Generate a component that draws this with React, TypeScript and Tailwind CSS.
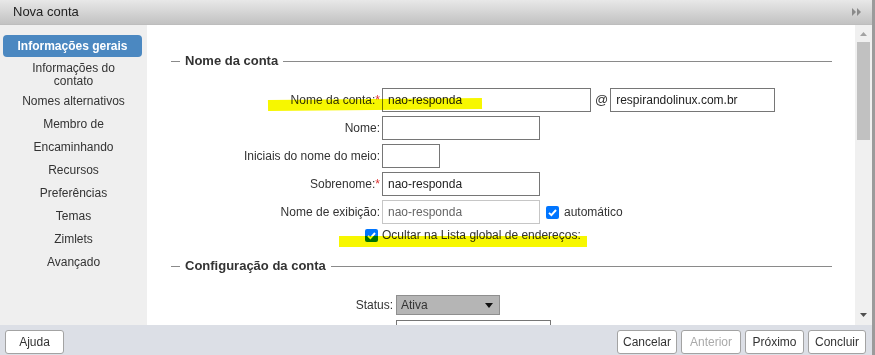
import React from 'react'

const sideItems = ['Nomes alternativos', 'Membro de', 'Encaminhando', 'Recursos', 'Preferências', 'Temas', 'Zimlets', 'Avançado']

const Check = () => (
  <span className="w-[13px] h-[13px] rounded-[2px] bg-[#0075ff] flex items-center justify-center">
    <svg width="11" height="11" viewBox="0 0 11 11">
      <path d="M2 5.8 L4.4 8.2 L9 3" fill="none" stroke="white" strokeWidth="1.9" />
    </svg>
  </span>
)

const Legend = ({ title }: { title: string }) => (
  <div className="flex items-center h-[16px]">
    <div className="w-[9px] h-px bg-[#8a8a8a]" />
    <span className="px-[5px] text-[13px] font-bold text-[#333]">{title}</span>
    <div className="flex-1 h-px bg-[#8a8a8a]" />
  </div>
)

const Field = ({ w, value, muted }: { w: string; value?: string; muted?: boolean }) => (
  <div
    className={`${w} h-[24px] bg-white border flex items-center pl-[5px] ${
      muted ? 'border-[#c6c6c6] text-[#666]' : 'border-[#767676] text-[#222]'
    }`}
  >
    {value}
  </div>
)

const Btn = ({ label, w, disabled }: { label: string; w: string; disabled?: boolean }) => (
  <div
    className={`${w} h-[24px] bg-white border border-[#a3a3a3] rounded-[3px] flex items-center justify-center ${
      disabled ? 'text-[#aaa]' : 'text-[#333]'
    }`}
  >
    {label}
  </div>
)

export default function App() {
  return (
    <div className="w-[875px] h-[355px] flex flex-col overflow-hidden border-r-[3px] border-[#9b9b9b] font-['Liberation_Sans',Arial,sans-serif] text-[12px] text-[#333]">
      <div className="h-[25px] flex-shrink-0 flex items-center justify-between pl-[13px] pr-[10px] bg-gradient-to-b from-[#e8e8e8] to-[#c2c2c2] border-b border-[#bdbdbd]">
        <span className="text-[13px] text-[#222]">Nova conta</span>
        <svg width="10" height="8" viewBox="0 0 10 8">
          <path d="M0 0 L4 4 L0 8 Z M5 0 L9 4 L5 8 Z" fill="#8a8a8a" />
        </svg>
      </div>

      <div className="flex-1 flex min-h-0">
        <div className="w-[147px] flex-shrink-0 bg-[#efefef] pt-[10px] text-center">
          <div className="mx-[3px] w-[139px] h-[22px] rounded-[4px] bg-[#4b88c1] text-white font-bold flex items-center justify-center">
            Informações gerais
          </div>
          <div className="pt-[5px] pb-[1px] leading-[13px]">
            Informações do
            <br />
            contato
          </div>
          {sideItems.map(item => (
            <div key={item} className="h-[23px] flex items-center justify-center">
              {item}
            </div>
          ))}
        </div>

        <div className="flex-1 bg-white relative overflow-hidden pt-[28px] pl-[24px] pr-[23px]">
          <Legend title="Nome da conta" />
          <div className="mt-[19px] grid grid-cols-[209px_1fr] gap-x-[2px] gap-y-[4px] items-center">
            <div className="text-right">
              Nome da conta:<span className="text-[#d33]">*</span>
            </div>
            <div className="flex items-center">
              <Field w="w-[209px]" value="nao-responda" />
              <span className="ml-[4px] mr-[2px] text-[13px]">@</span>
              <Field w="w-[165px]" value="respirandolinux.com.br" />
            </div>
            <div className="text-right">Nome:</div>
            <Field w="w-[158px]" />
            <div className="text-right">Iniciais do nome do meio:</div>
            <Field w="w-[58px]" />
            <div className="text-right">
              Sobrenome:<span className="text-[#d33]">*</span>
            </div>
            <Field w="w-[158px]" value="nao-responda" />
            <div className="text-right">Nome de exibição:</div>
            <div className="flex items-center">
              <Field w="w-[158px]" value="nao-responda" muted />
              <span className="ml-[6px] mr-[5px]">
                <Check />
              </span>
              <span>automático</span>
            </div>
            <div className="flex justify-end pr-[2px] h-[14px] items-center">
              <Check />
            </div>
            <div className="h-[14px] flex items-center">Ocultar na Lista global de endereços:</div>
          </div>

          <div className="mt-[16px]">
            <Legend title="Configuração da conta" />
          </div>
          <div className="mt-[21px] grid grid-cols-[222px_1fr] gap-x-[3px] gap-y-[5px] items-center">
            <div className="text-right">Status:</div>
            <div className="w-[104px] h-[20px] bg-[#b5b5b5] border border-[#8f8f8f] flex items-center justify-between pl-[4px] pr-[6px] text-[#333]">
              <span>Ativa</span>
              <svg width="8" height="5" viewBox="0 0 8 5">
                <path d="M0 0 L8 0 L4 5 Z" fill="#111" />
              </svg>
            </div>
            <div />
            <Field w="w-[155px]" />
          </div>

          <div className="absolute left-[121px] top-[74px] w-[214px] h-[11px] bg-[#f7f700] mix-blend-multiply -rotate-[0.6deg]" />
          <div className="absolute left-[192px] top-[211px] w-[248px] h-[11px] bg-[#f7f700] mix-blend-multiply" />
        </div>

        <div className="w-[17px] flex-shrink-0 bg-[#f0f0f0] flex flex-col items-center pt-[7px] pb-[8px]">
          <svg width="7" height="4" viewBox="0 0 7 4">
            <path d="M0 4 L3.5 0 L7 4 Z" fill="#a3a3a3" />
          </svg>
          <div className="mt-[6px] w-[13px] h-[98px] bg-[#c1c1c1]" />
          <div className="flex-1" />
          <svg width="7" height="4" viewBox="0 0 7 4">
            <path d="M0 0 L7 0 L3.5 4 Z" fill="#505050" />
          </svg>
        </div>
      </div>

      <div className="h-[30px] flex-shrink-0 bg-[#dcdfe6] flex items-start pt-[5px] pl-[5px] pr-[6px]">
        <Btn label="Ajuda" w="w-[59px]" />
        <div className="flex-1" />
        <div className="flex gap-[4px]">
          <Btn label="Cancelar" w="w-[60px]" />
          <Btn label="Anterior" w="w-[60px]" disabled />
          <Btn label="Próximo" w="w-[59px]" />
          <Btn label="Concluir" w="w-[58px]" />
        </div>
      </div>
    </div>
  )
}
